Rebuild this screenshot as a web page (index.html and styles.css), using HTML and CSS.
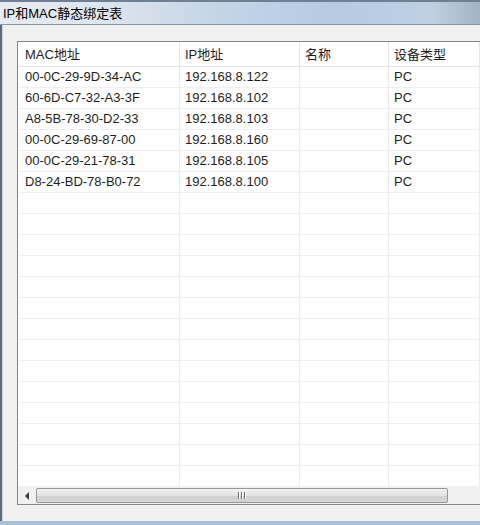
FILE: index.html
```html
<!DOCTYPE html>
<html lang="zh-CN">
<head>
    <meta charset="UTF-8">
    <meta name="viewport" content="width=device-width, initial-scale=1.0">
    <title>IP和MAC静态绑定表</title>
    <link rel="stylesheet" href="styles.css">
</head>
<body>

    <div class="window">
        <!-- Title bar -->
        <div class="titlebar">
            <span class="title">IP和MAC静态绑定表</span>
        </div>

        <!-- Client area -->
        <div class="client">
            <div class="listview">
                <div class="grid header">
                    <div class="cell">MAC地址</div>
                    <div class="cell">IP地址</div>
                    <div class="cell">名称</div>
                    <div class="cell">设备类型</div>
                </div>
                <div class="rows" id="rows"></div>

                <!-- Horizontal scrollbar -->
                <div class="hscroll">
                    <div class="arrow-btn"><span class="arrow-left"></span></div>
                    <div class="thumb"><span class="grip"><i></i><i></i><i></i></span></div>
                    <div class="track"></div>
                </div>
            </div>
        </div>
    </div>

    <script>
        const bindings = [
            ["00-0C-29-9D-34-AC", "192.168.8.122", "", "PC"],
            ["60-6D-C7-32-A3-3F", "192.168.8.102", "", "PC"],
            ["A8-5B-78-30-D2-33", "192.168.8.103", "", "PC"],
            ["00-0C-29-69-87-00", "192.168.8.160", "", "PC"],
            ["00-0C-29-21-78-31", "192.168.8.105", "", "PC"],
            ["D8-24-BD-78-B0-72", "192.168.8.100", "", "PC"]
        ];
        const totalRows = 20;

        const rows = document.getElementById("rows");
        for (let i = 0; i < totalRows; i++) {
            const row = document.createElement("div");
            row.className = "grid row";
            const data = bindings[i] || ["", "", "", ""];
            data.forEach(text => {
                const cell = document.createElement("div");
                cell.className = "cell";
                cell.textContent = text;
                row.appendChild(cell);
            });
            rows.appendChild(row);
        }
    </script>

</body>
</html>
```

FILE: styles.css
```css
* {
    margin: 0;
    padding: 0;
    box-sizing: border-box;
}
body {
    font-family: "Liberation Sans", "Noto Sans CJK SC", sans-serif;
    font-size: 13px;
    color: #1e1e1e;
    background-color: #f0f0f0;
    overflow: hidden;
}
.window {
    width: 480px;
    height: 525px;
    display: flex;
    flex-direction: column;
    overflow: hidden;
    background-color: #f0f0f0;
    border-bottom: 4px solid #a9bfd6;
}
.titlebar {
    height: 25px;
    display: flex;
    align-items: center;
    padding-left: 3px;
    padding-bottom: 2px;
    border-top: 2px solid #6f8095;
    border-bottom: 1px solid #8a97a6;
    background: linear-gradient(90deg, #e6ebf1 0%, #dfe6ee 20%, #c4d5e8 45%, #b5cae2 70%, #bfd0e3 90%, #a3b4c7 100%);
}
.title {
    color: #000;
    font-size: 13px;
}
.client {
    flex: 1;
    display: flex;
    padding: 16px 0 16px 17px;
    box-shadow: inset 2px 0 0 #5d6b7c, inset 3px 0 0 #c9d4e0;
}
.listview {
    flex: 1;
    display: flex;
    flex-direction: column;
    background-color: #fff;
    border: 1px solid #828790;
    border-right: none;
}
.grid {
    display: grid;
    grid-template-columns: 162px 120px 89px 1fr;
}
.cell {
    padding-left: 5px;
    white-space: nowrap;
    overflow: hidden;
    border-right: 1px solid #ececec;
}
.cell:first-child {
    padding-left: 7px;
}
.header {
    height: 25px;
    line-height: 26px;
    border-bottom: 1px solid #e2e4e7;
    background: linear-gradient(#fff, #fdfdfd);
}
.header .cell {
    border-right: 1px solid #e3e5e8;
}
.rows {
    flex: 1;
    overflow: hidden;
}
.row {
    height: 21px;
    line-height: 20px;
}
.row .cell {
    border-bottom: 1px solid #f0f0f0;
}
.hscroll {
    height: 17px;
    flex-shrink: 0;
    display: flex;
    background-color: #f0f0f0;
}
.arrow-btn {
    width: 18px;
    display: flex;
    align-items: center;
    justify-content: center;
}
.arrow-left {
    width: 0;
    height: 0;
    border-top: 4px solid transparent;
    border-bottom: 4px solid transparent;
    border-right: 4px solid #3c3c3c;
}
.thumb {
    width: 412px;
    margin: 1px 0;
    border: 1px solid #979797;
    border-radius: 2px;
    background: linear-gradient(#f2f2f2, #e2e2e2 50%, #cfcfcf 51%, #d6d6d6);
    display: flex;
    align-items: center;
    justify-content: center;
}
.grip {
    display: flex;
    gap: 1px;
}
.grip i {
    width: 1px;
    height: 7px;
    background-color: #6f6f6f;
    box-shadow: 1px 0 0 #fff;
    margin-right: 1px;
}
.track {
    flex: 1;
}
```
